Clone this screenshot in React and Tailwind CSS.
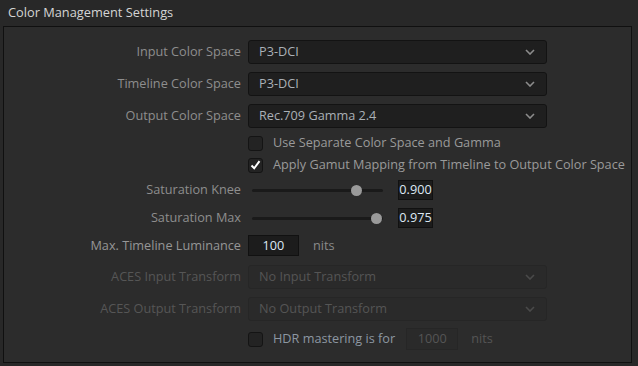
import React from "react";

const font = { fontFamily: '"Open Sans", "Noto Sans", sans-serif' };

const Chevron = ({ dim }) => (
  <svg width="10" height="6" viewBox="0 0 10 6" className="mr-[11px]">
    <path
      d="M1 1 L5 5 L9 1"
      fill="none"
      stroke={dim ? "#4a4a4a" : "#8c8c8c"}
      strokeWidth="1.6"
    />
  </svg>
);

const Label = ({ children, dim }) => (
  <div
    className={`w-[237px] shrink-0 text-right text-[12.7px] ${
      dim ? "text-[#565656]" : "text-[#8e8e8e]"
    }`}
  >
    {children}
  </div>
);

const Dropdown = ({ value, dim }) => (
  <div
    className={`ml-[7px] flex h-full w-[299px] items-center justify-between rounded-[3px] border ${
      dim ? "border-[#262626] bg-[#2a2a2a]" : "border-[#131313] bg-[#1f1f1f]"
    }`}
  >
    <span
      className={`pl-[10px] text-[12.7px] ${
        dim ? "text-[#555555]" : "text-[#aab0b6]"
      }`}
    >
      {value}
    </span>
    <Chevron dim={dim} />
  </div>
);

const Checkbox = ({ checked }) => (
  <div className="ml-[7px] flex h-[15px] w-[15px] items-center justify-center rounded-[3px] border border-[#141414] bg-[#232323]">
    {checked && (
      <svg width="11" height="10" viewBox="0 0 11 10">
        <path
          d="M1.5 5.5 L4.2 8.3 L9.5 1.2"
          fill="none"
          stroke="#ffffff"
          strokeWidth="2"
        />
      </svg>
    )}
  </div>
);

const Slider = ({ pos, value }) => (
  <div className="ml-[11px] flex items-center">
    <div className="relative h-[3px] w-[131px] rounded-full bg-[#1a1a1a]">
      <div
        className="absolute top-[-4px] h-[11px] w-[11px] rounded-full bg-[#9a9a9a]"
        style={{ left: pos - 5 }}
      />
    </div>
    <div className="ml-[15px] flex h-[20px] w-[35px] items-center justify-center border border-[#111111] bg-[#1c1c1c] text-[12.7px] text-[#dde8f4]">
      {value}
    </div>
  </div>
);

export default function App() {
  return (
    <div className="h-[366px] w-[638px] overflow-hidden bg-[#282828]" style={font}>
      <div className="h-[26px] pl-[8px] pt-[2px] text-[12.8px] leading-[20px] text-[#d4d4d4]">
        Color Management Settings
      </div>
      <div className="ml-[3px] h-[337px] w-[629px] border border-[#101010] bg-[#2c2c2c] pt-[13px]">
        <div className="flex h-[24px] items-center">
          <Label>Input Color Space</Label>
          <Dropdown value="P3-DCI" />
        </div>
        <div className="mt-[8px] flex h-[24px] items-center">
          <Label>Timeline Color Space</Label>
          <Dropdown value="P3-DCI" />
        </div>
        <div className="mt-[8px] flex h-[24px] items-center">
          <Label>Output Color Space</Label>
          <Dropdown value="Rec.709 Gamma 2.4" />
        </div>
        <div className="mt-[7px] flex h-[16px] items-center">
          <div className="w-[237px] shrink-0" />
          <Checkbox />
          <span className="ml-[10px] text-[12.7px] text-[#9a9a9a]">
            Use Separate Color Space and Gamma
          </span>
        </div>
        <div className="mt-[6px] flex h-[16px] items-center">
          <div className="w-[237px] shrink-0" />
          <Checkbox checked />
          <span className="ml-[10px] whitespace-nowrap text-[12.7px] text-[#9a9a9a]">
            Apply Gamut Mapping from Timeline to Output Color Space
          </span>
        </div>
        <div className="mt-[7px] flex h-[20px] items-center">
          <Label>Saturation Knee</Label>
          <Slider pos={104} value="0.900" />
        </div>
        <div className="mt-[8px] flex h-[20px] items-center">
          <Label>Saturation Max</Label>
          <Slider pos={124} value="0.975" />
        </div>
        <div className="mt-[7px] flex h-[21px] items-center">
          <div className="w-[237px] shrink-0 text-right text-[12.7px] text-[#969696]">
            Max. Timeline Luminance
          </div>
          <div className="ml-[7px] flex h-full w-[51px] items-center justify-center border border-[#111111] bg-[#1c1c1c] text-[12.7px] text-[#dde8f4]">
            100
          </div>
          <span className="ml-[14px] text-[12.7px] text-[#8a8a8a]">nits</span>
        </div>
        <div className="mt-[9px] flex h-[24px] items-center">
          <Label dim>ACES Input Transform</Label>
          <Dropdown dim value="No Input Transform" />
        </div>
        <div className="mt-[8px] flex h-[24px] items-center">
          <Label dim>ACES Output Transform</Label>
          <Dropdown dim value="No Output Transform" />
        </div>
        <div className="mt-[7px] flex h-[22px] items-center">
          <div className="w-[237px] shrink-0" />
          <Checkbox />
          <span className="ml-[10px] text-[12.7px] text-[#8c97a2]">
            HDR mastering is for
          </span>
          <div className="ml-[11px] flex h-full w-[52px] items-center justify-center border border-[#262626] bg-[#2a2a2a] text-[12.7px] text-[#555555]">
            1000
          </div>
          <span className="ml-[13px] text-[12.7px] text-[#555555]">nits</span>
        </div>
      </div>
    </div>
  );
}
